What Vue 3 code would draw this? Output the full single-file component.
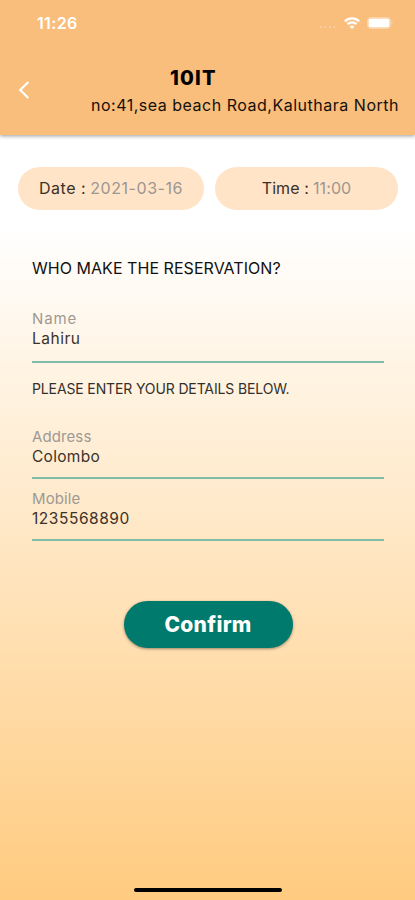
<template>
  <div class="page">
    <header class="header">
      <div class="status-bar">
        <span class="clock">11:26</span>
        <div class="status-icons">
          <svg class="signal" viewBox="0 0 18 4">
            <circle cx="2" cy="2" r="1" />
            <circle cx="6.5" cy="2" r="1" />
            <circle cx="11" cy="2" r="1" />
            <circle cx="15.5" cy="2" r="1" />
          </svg>
          <svg class="wifi" viewBox="0 0 16 12">
            <path d="M0.9 4.3a10.2 10.2 0 0 1 14.2 0" />
            <path d="M3.5 7.2a6.4 6.4 0 0 1 9 0" />
            <path class="wifi-dot" d="M8 12L5.6 9.6a3.4 3.4 0 0 1 4.8 0z" />
          </svg>
          <svg class="battery" viewBox="0 0 26 12">
            <rect class="battery-case" x="0.5" y="0.5" width="23" height="11" rx="3" />
            <rect x="1.5" y="1.5" width="21" height="9" rx="1.8" />
            <path class="battery-cap" d="M24.5 4v4c1.3-.6 1.3-3.4 0-4z" />
          </svg>
        </div>
      </div>
      <div class="nav">
        <button class="back" aria-label="Back">
          <svg viewBox="0 0 12 20"><path d="M10.3 2L2.2 10L10.3 18" /></svg>
        </button>
        <div class="place">
          <h1>10IT</h1>
          <p>no:41,sea beach Road,Kaluthara North</p>
        </div>
      </div>
    </header>

    <main class="content">
      <div class="pills">
        <div class="pill date"><span>Date :</span> <em>{{ date }}</em></div>
        <div class="pill time"><span>Time :</span> <em>{{ time }}</em></div>
      </div>

      <form class="form" @submit.prevent>
        <h2>WHO MAKE THE RESERVATION?</h2>
        <div class="field name">
          <label>Name</label>
          <span class="value">Lahiru</span>
        </div>
        <h3>PLEASE ENTER YOUR DETAILS BELOW.</h3>
        <div v-for="f in details" :key="f.label" class="field" :class="f.key">
          <label>{{ f.label }}</label>
          <span class="value">{{ f.value }}</span>
        </div>
        <button class="confirm" type="submit">Confirm</button>
      </form>
    </main>

    <div class="home-indicator"></div>
  </div>
</template>

<script setup>
import { ref } from 'vue'

const date = ref('2021-03-16')
const time = ref('11:00')

const details = ref([
  { key: 'address', label: 'Address', value: 'Colombo' },
  { key: 'mobile', label: 'Mobile', value: '1235568890' }
])
</script>

<style>
body {
  margin: 0;
}
</style>

<style scoped>
.page {
  display: flex;
  flex-direction: column;
  width: 415px;
  height: 900px;
  overflow: hidden;
  font-family: Inter, "Liberation Sans", sans-serif;
  color: #3a3127;
  background: linear-gradient(180deg, #fff 225px, #ffcb80 900px);
}

.page * {
  box-sizing: border-box;
}

h1, h2, h3, p {
  margin: 0;
  white-space: nowrap;
}

button {
  border: none;
  padding: 0;
  font-family: inherit;
}

.header {
  flex: none;
  height: 135px;
  background: #f9bd7c;
  box-shadow: 0 1px 4px rgba(0, 0, 0, 0.4);
}

.status-bar {
  display: flex;
  align-items: center;
  justify-content: space-between;
  height: 46px;
  padding: 0 22px 0 37px;
}

.clock {
  color: #fff;
  font-size: 16px;
  font-weight: 600;
  letter-spacing: 0.35px;
}

.status-icons {
  display: flex;
  align-items: center;
}

.status-icons svg {
  fill: #fff;
}

.signal {
  width: 18px;
  height: 4px;
  margin: 8px 7px 0 0;
  opacity: 0.35;
}

.wifi {
  width: 16px;
  height: 12px;
  margin-right: 7px;
}

.wifi path {
  fill: none;
  stroke: #fff;
  stroke-width: 2.3;
}

.wifi .wifi-dot {
  fill: #fff;
  stroke: none;
}

.battery {
  width: 26px;
  height: 12px;
}

.battery .battery-case {
  fill: none;
  stroke: #fff;
  stroke-opacity: 0.35;
}

.battery .battery-cap {
  fill-opacity: 0.4;
}

.nav {
  display: flex;
  justify-content: space-between;
  padding: 20px 16px 0 18px;
}

.back {
  width: 12px;
  height: 20px;
  margin-top: 14px;
  background: none;
}

.back svg {
  display: block;
  width: 12px;
  height: 20px;
  fill: none;
  stroke: #fff;
  stroke-width: 2.2;
}

.place h1 {
  margin-left: 79px;
  line-height: 24px;
  font-size: 20px;
  font-weight: 800;
  letter-spacing: 1.2px;
  color: #000;
}

.place p {
  margin-top: 4px;
  line-height: 22px;
  font-size: 16px;
  letter-spacing: 0.51px;
  color: #15100b;
}

.pills {
  display: flex;
  gap: 11px;
  padding: 32px 17px 0 18px;
}

.pill {
  display: flex;
  align-items: center;
  justify-content: center;
  gap: 4px;
  height: 43px;
  padding-bottom: 1px;
  border-radius: 22px;
  background: #ffe4c8;
  font-size: 16px;
  white-space: nowrap;
}

.pill.date {
  width: 186px;
  letter-spacing: 0.55px;
}

.pill.time {
  width: 183px;
  letter-spacing: 0.1px;
}

.pill em {
  font-style: normal;
  color: #9c9690;
}

.form {
  display: flex;
  flex-direction: column;
  padding: 46px 31px 0 32px;
}

h2 {
  line-height: 24px;
  font-size: 16px;
  font-weight: 400;
  letter-spacing: 0.04px;
  color: #111;
}

h3 {
  margin-top: 15px;
  line-height: 22px;
  font-size: 14px;
  font-weight: 400;
  letter-spacing: -0.13px;
  color: #33302b;
}

.field {
  display: flex;
  flex-direction: column;
  line-height: 20px;
  letter-spacing: 0.3px;
  border-bottom: 2px solid #80bda8;
}

.field label {
  font-size: 15px;
  color: #9e9993;
}

.field .value {
  font-size: 15.5px;
  color: #3a332a;
}

.field.name {
  height: 54px;
  margin-top: 29px;
}

.field.name label {
  letter-spacing: 0.9px;
}

.field.name .value {
  letter-spacing: 0.5px;
}

.field.address {
  height: 52px;
  margin-top: 27px;
}

.field.address label {
  letter-spacing: 0.1px;
}

.field.mobile {
  height: 52px;
  margin-top: 10px;
}

.field.mobile label {
  letter-spacing: 0.1px;
}

.field.mobile .value {
  letter-spacing: 0.55px;
}

.confirm {
  align-self: center;
  width: 169px;
  height: 47px;
  margin-top: 60px;
  border-radius: 24px;
  background: #007a6c;
  box-shadow: 0 1px 3px rgba(0, 0, 0, 0.4);
  color: #fff;
  font-size: 21px;
  font-weight: 800;
  letter-spacing: 0.3px;
}

.home-indicator {
  flex: none;
  align-self: center;
  width: 148px;
  height: 4px;
  margin-top: auto;
  margin-bottom: 8px;
  border-radius: 3px;
  background: #000;
}
</style>
